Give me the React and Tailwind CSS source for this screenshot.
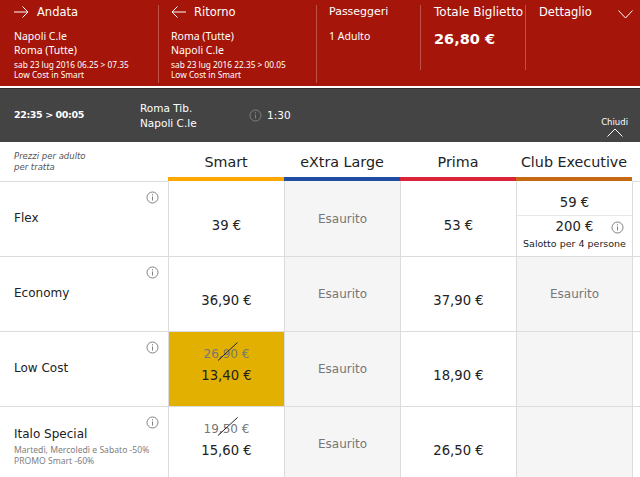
import React from "react";

const Info = ({ className = "" }) => (
  <svg width="13" height="13" viewBox="0 0 13 13" fill="none" stroke="#808080" className={className}>
    <circle cx="6.5" cy="6.5" r="5.5" />
    <path d="M6.5 5.5v4M6.5 3.2v1.2" />
  </svg>
);

const Arrow = ({ left }) => (
  <svg width="15" height="12" viewBox="0 0 15 12" fill="none" stroke="white" strokeWidth="1">
    {left ? <path d="M15 6H1M6.5 .5 1 6l5.5 5.5" /> : <path d="M0 6h14M8.5 .5 14 6l-5.5 5.5" />}
  </svg>
);

// strikethrough line drawn over the old price
const Slash = () => (
  <svg width="20" height="19" viewBox="0 0 20 19" stroke="#222" strokeWidth="1" className="absolute left-[49px] top-[10px]">
    <path d="M0 18.5 19.5 .5" />
  </svg>
);

const Price = ({ children }) => (
  <div className="h-full flex items-center justify-center pt-[14px] text-[13.2px] text-[#222]">{children}</div>
);

const Sold = () => (
  <div className="h-full flex items-center justify-center text-[12px] text-[#777] bg-[#f5f5f5]">Esaurito</div>
);

const Empty = () => <div className="h-full bg-[#f5f5f5]" />;

const Offer = ({ old, price, bg }) => (
  <div className={`relative h-full flex flex-col items-center pt-[13px] ${bg}`}>
    <div className="text-[12px] leading-[18px] text-[#777]">{old}</div>
    <div className="mt-[4px] text-[13.2px] leading-[18px] text-[#222]">{price}</div>
    <Slash />
  </div>
);

const Row = ({ first, name, sub, cells }) => {
  const line = first ? "" : "border-t";
  return (
    <div className="flex h-[75px]">
      <div className="relative w-[168px] border-t border-[#dcdcdc] pl-[14px] pt-[28px]">
        <Info className="absolute left-[146px] top-[9px]" />
        {sub ? (
          <div className="-mt-[9px]">
            <div className="text-[12px] leading-[16px] text-[#222]">{name}</div>
            <div className="mt-[2px] font-['Noto_Sans',sans-serif] text-[8.6px] leading-[12px] text-[#808080] whitespace-nowrap">{sub[0]}</div>
            <div className="-mt-[1px] font-['Noto_Sans',sans-serif] text-[8.6px] leading-[12px] text-[#808080] whitespace-nowrap">{sub[1]}</div>
          </div>
        ) : (
          <div className="text-[12px] leading-[16px] text-[#222]">{name}</div>
        )}
      </div>
      {cells.map((c, i) => (
        <div key={i} className={`w-[116px] border-l border-[#dcdcdc] ${line}`}>{c}</div>
      ))}
      <div className="flex-1 border-l border-t border-[#dcdcdc]" />
    </div>
  );
};

const heads = [
  ["Smart", "border-[#ffa800]"],
  ["eXtra Large", "border-[#1f4ea1]"],
  ["Prima", "border-[#d9243a]"],
  ["Club Executive", "border-[#c56a12]"],
];

export default function App() {
  return (
    <div className="w-[640px] h-[477px] overflow-hidden bg-white font-['DejaVu_Sans',sans-serif]">
      {/* riepilogo viaggio */}
      <div className="flex h-[86px] bg-[#a51509] text-white">
        <div className="w-[159px] h-[78px] mt-[5px] border-r border-[#c0504a] pl-[14px]">
          <div className="flex items-center gap-[8px] h-[14px]">
            <Arrow />
            <span className="pt-[1px] text-[11.5px]">Andata</span>
          </div>
          <div className="mt-[11px] font-['Noto_Sans',sans-serif] text-[10.5px] leading-[13.5px]">Napoli C.le<br />Roma (Tutte)</div>
          <div className="mt-[3px] font-['Noto_Sans',sans-serif] text-[8.3px] leading-[9.5px] whitespace-nowrap">sab 23 lug 2016 06.25 &gt; 07.35<br />Low Cost in Smart</div>
        </div>
        <div className="w-[158px] h-[78px] mt-[5px] border-r border-[#c0504a] pl-[12px]">
          <div className="flex items-center gap-[8px] h-[14px]">
            <Arrow left />
            <span className="pt-[1px] text-[11.5px]">Ritorno</span>
          </div>
          <div className="mt-[11px] font-['Noto_Sans',sans-serif] text-[10.5px] leading-[13.5px]">Roma (Tutte)<br />Napoli C.le</div>
          <div className="mt-[3px] font-['Noto_Sans',sans-serif] text-[8.3px] leading-[9.5px] whitespace-nowrap">sab 23 lug 2016 22.35 &gt; 00.05<br />Low Cost in Smart</div>
        </div>
        <div className="w-[104px] h-[65px] mt-[5px] border-r border-[#c0504a] pl-[12px]">
          <div className="text-[11px] leading-[14px]">Passeggeri</div>
          <div className="mt-[11px] font-['Noto_Sans',sans-serif] text-[10.5px] leading-[13.5px]">1 Adulto</div>
        </div>
        <div className="w-[105px] h-[65px] mt-[5px] border-r border-[#c0504a] pl-[13px]">
          <div className="text-[12px] leading-[14px] whitespace-nowrap">Totale Biglietto</div>
          <div className="mt-[10px] text-[14.5px] leading-[20px] font-bold whitespace-nowrap">26,80 €</div>
        </div>
        <div className="flex flex-1 mt-[5px] pl-[13px] items-start">
          <div className="text-[11.5px] leading-[14px]">Dettaglio</div>
          <svg width="15" height="9" viewBox="0 0 15 9" fill="none" stroke="white" className="ml-[26px] mt-[5px]">
            <path d="M.5 .5 7.5 8l7-7.5" />
          </svg>
        </div>
      </div>

      {/* treno selezionato */}
      <div className="flex items-center mt-[2px] h-[54px] border-t border-[#2d2d2d] bg-[#444444] text-white">
        <div className="w-[126px] ml-[14px] text-[9.5px] font-bold tracking-[-0.4px] whitespace-nowrap">22:35 &gt; 00:05</div>
        <div className="w-[109px] text-[10.5px] leading-[15px]">Roma Tib.<br />Napoli C.le</div>
        <Info />
        <div className="ml-[5px] text-[10.5px]">1:30</div>
        <div className="ml-auto mr-[12px] self-end flex flex-col items-center">
          <span className="text-[8.5px] leading-[12px]">Chiudi</span>
          <svg width="16" height="9" viewBox="0 0 16 9" fill="none" stroke="white" className="mb-[5px]">
            <path d="M.5 8.5 8 1l7.5 7.5" />
          </svg>
        </div>
      </div>

      {/* tariffe */}
      <div className="flex h-[39px]">
        <div className="w-[168px] pl-[14px] pt-[9px] text-[8.5px] leading-[10.5px] italic text-[#555]">Prezzi per adulto<br />per tratta</div>
        {heads.map(([name, color]) => (
          <div key={name} className={`w-[116px] border-b-4 ${color} flex justify-center pt-[11px] text-[14.3px] leading-[18px] text-[#222] whitespace-nowrap`}>{name}</div>
        ))}
      </div>
      <Row
        first
        name="Flex"
        cells={[
          <Price>39 €</Price>,
          <Sold />,
          <Price>53 €</Price>,
          <div className="h-full flex flex-col">
            <div className="h-[35px] pt-[9px] border-b border-[#e8e8e8] flex items-center justify-center text-[13.2px] text-[#222]">59 €</div>
            <div className="relative flex flex-col items-center">
              <div className="mt-[2px] text-[13.2px] leading-[18px] text-[#222]">200 €</div>
              <Info className="absolute right-[8px] top-[5px]" />
              <div className="mt-[1px] text-[9.5px] leading-[14px] text-[#222] whitespace-nowrap">Salotto per 4 persone</div>
            </div>
          </div>,
        ]}
      />
      <Row name="Economy" cells={[<Price>36,90 €</Price>, <Sold />, <Price>37,90 €</Price>, <Sold />]} />
      <Row
        name="Low Cost"
        cells={[<Offer old="26,90 €" price="13,40 €" bg="bg-[#e2b000]" />, <Sold />, <Price>18,90 €</Price>, <Empty />]}
      />
      <Row
        name="Italo Special"
        sub={["Martedì, Mercoledì e Sabato -50%", "PROMO Smart -60%"]}
        cells={[<Offer old="19,50 €" price="15,60 €" bg="" />, <Sold />, <Price>26,50 €</Price>, <Empty />]}
      />
    </div>
  );
}
